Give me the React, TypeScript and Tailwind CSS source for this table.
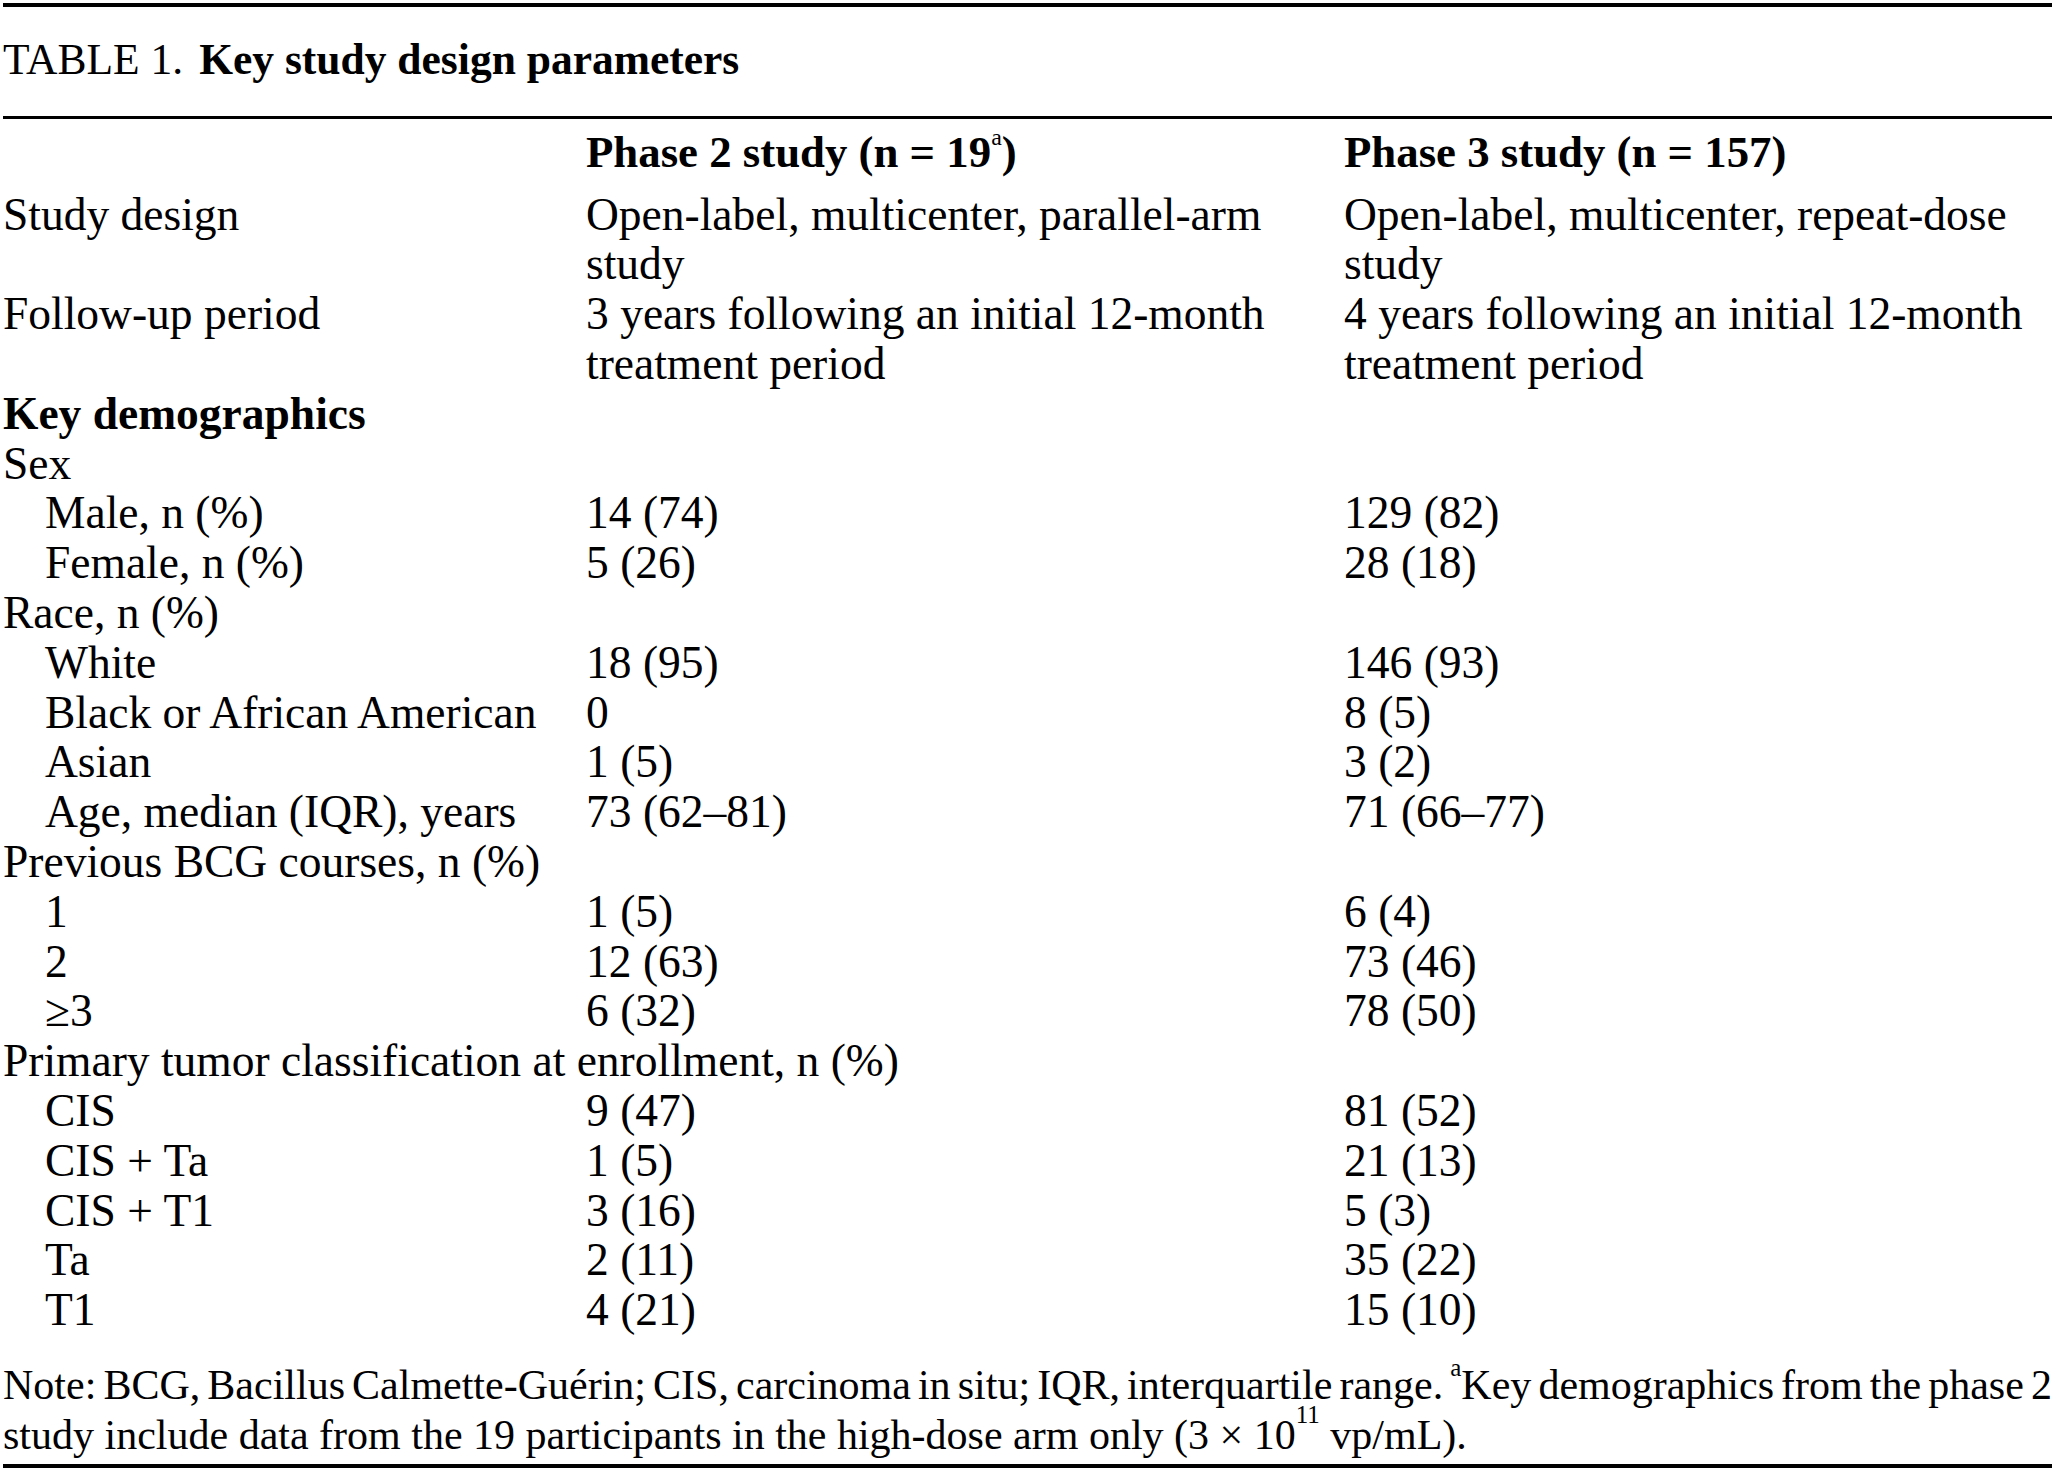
import React from "react";

type Row = { label: string; a?: string; b?: string; indent?: boolean; bold?: boolean };

const rows: Row[] = [
  { label: "Key demographics", bold: true },
  { label: "Sex" },
  { label: "Male, n (%)", a: "14 (74)", b: "129 (82)", indent: true },
  { label: "Female, n (%)", a: "5 (26)", b: "28 (18)", indent: true },
  { label: "Race, n (%)" },
  { label: "White", a: "18 (95)", b: "146 (93)", indent: true },
  { label: "Black or African American", a: "0", b: "8 (5)", indent: true },
  { label: "Asian", a: "1 (5)", b: "3 (2)", indent: true },
  { label: "Age, median (IQR), years", a: "73 (62–81)", b: "71 (66–77)", indent: true },
  { label: "Previous BCG courses, n (%)" },
  { label: "1", a: "1 (5)", b: "6 (4)", indent: true },
  { label: "2", a: "12 (63)", b: "73 (46)", indent: true },
  { label: "≥3", a: "6 (32)", b: "78 (50)", indent: true },
  { label: "Primary tumor classification at enrollment, n (%)" },
  { label: "CIS", a: "9 (47)", b: "81 (52)", indent: true },
  { label: "CIS + Ta", a: "1 (5)", b: "21 (13)", indent: true },
  { label: "CIS + T1", a: "3 (16)", b: "5 (3)", indent: true },
  { label: "Ta", a: "2 (11)", b: "35 (22)", indent: true },
  { label: "T1", a: "4 (21)", b: "15 (10)", indent: true },
];

const noteWords1 = "Note: BCG, Bacillus Calmette-Guérin; CIS, carcinoma in situ; IQR, interquartile range.".split(" ");
const noteWords2 = "demographics from the phase 2".split(" ");

export default function App() {
  return (
    <div className="min-h-[1472px] w-[2056px] bg-white pt-[3px] pl-[3px] text-black [font-family:'Liberation_Serif','Times_New_Roman',serif] text-[45.5px] leading-[49.8px]">
      <div className="w-[2049px] border-t-[4px] border-b-[4px] border-black">
        <div className="pt-[28px] pb-[31px] border-b-[3px] border-black whitespace-nowrap text-[43.5px]">
          <span>TABLE 1.</span>
          <span className="ml-[16px] font-bold">Key study design parameters</span>
        </div>
        <div className="grid grid-cols-[583px_758px_1fr] pt-[9px] pb-[12px] text-[44.8px]">
          <div></div>
          <div className="font-bold whitespace-nowrap">
            Phase 2 study (n = 19<sup className="text-[24px] font-normal align-[10px] leading-none">a</sup>)
          </div>
          <div className="font-bold whitespace-nowrap">Phase 3 study (n = 157)</div>
        </div>
        <div className="grid grid-cols-[583px_758px_1fr]">
          <div className="whitespace-nowrap">Study design</div>
          <div className="whitespace-nowrap">
            Open-label, multicenter, parallel-arm
            <br />
            study
          </div>
          <div className="whitespace-nowrap">
            Open-label, multicenter, repeat-dose
            <br />
            study
          </div>
          <div className="whitespace-nowrap">Follow-up period</div>
          <div className="whitespace-nowrap">
            3 years following an initial 12-month
            <br />
            treatment period
          </div>
          <div className="whitespace-nowrap">
            4 years following an initial 12-month
            <br />
            treatment period
          </div>
          {rows.map((r, i) =>
            r.a === undefined ? (
              <div key={i} className={"col-span-3 whitespace-nowrap " + (r.bold ? "font-bold" : "")}>
                {r.label}
              </div>
            ) : (
              <React.Fragment key={i}>
                <div className={"whitespace-nowrap " + (r.indent ? "pl-[42px]" : "")}>{r.label}</div>
                <div className="whitespace-nowrap">{r.a}</div>
                <div className="whitespace-nowrap">{r.b}</div>
              </React.Fragment>
            )
          )}
        </div>
        <div className="pt-[26px] pb-[3px] text-[42px]">
          <div className="flex justify-between whitespace-nowrap">
            {noteWords1.map((w, i) => (
              <span key={i}>{w}</span>
            ))}
            <span>
              <sup className="text-[25px] align-[10px] leading-none">a</sup>Key
            </span>
            {noteWords2.map((w, i) => (
              <span key={"b" + i}>{w}</span>
            ))}
          </div>
          <div className="whitespace-nowrap">
            study include data from the 19 participants in the high-dose arm only (3 × 10
            <sup className="text-[25px] align-[13px] leading-none">11</sup> vp/mL).
          </div>
        </div>
      </div>
    </div>
  );
}
